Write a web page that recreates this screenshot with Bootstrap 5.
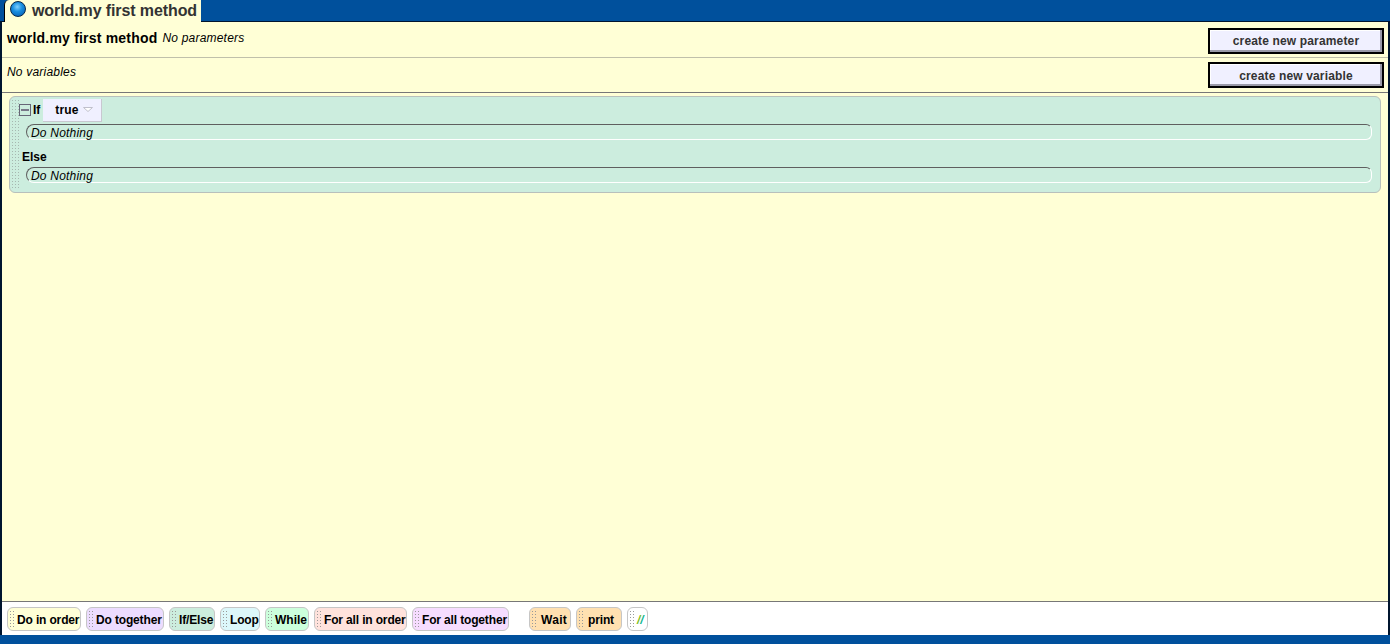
<!DOCTYPE html>
<html lang="en">
<head>
<meta charset="utf-8">
<title>world.my first method</title>
<link href="https://cdn.jsdelivr.net/npm/bootstrap@5.3.0/dist/css/bootstrap.min.css" rel="stylesheet">
<style>
html, body { height: 644px; overflow: hidden; }
body { background: #00509c; font-family: "Liberation Sans", Arial, sans-serif; font-size: 12px; color: #000; width: 1390px; }
.app-shell { height: 644px; }
.tab-strip { height: 22px; padding-left: 4px; flex: none; }
.doc-tab { width: 197px; height: 22px; background: #ffffd6; border-radius: 5px 0 0 0; border-left: 1px solid #000; padding-left: 5px; gap: 6px; font-size: 16px; font-weight: 700; color: #333; z-index: 1; letter-spacing: -.1px; }
.ball { width: 16px; height: 16px; border-radius: 50%; background: radial-gradient(circle at 45% 35%, #7fd0ff 0, #1a8fe0 40%, #0a6cc0 75%, #043a70 100%); border: 1px solid #06284c; flex: none; margin-top: -5px; }
.editor { flex: 1 1 auto; border-left: 2px solid #00152f; border-right: 2px solid #00152f; border-top: 1px solid #00152f; min-height: 0; margin-top: -1px; }
.head-row { height: 36px; flex: none; background: #ffffd6; border-bottom: 1px solid #c0c0aa; padding: 0 4px 0 5px; }
.var-row { height: 35px; flex: none; background: #ffffd6; border-bottom: 1px solid #777; padding: 0 4px 0 5px; }
.method-name { font-size: 14px; font-weight: 700; line-height: 16px; letter-spacing: .2px; }
.hint { font-style: italic; font-size: 12px; line-height: 14px; letter-spacing: .2px; }
.params-text { margin-bottom: 3px; gap: 5px; }
.vars-text { margin-bottom: 6px; }
.make-btn { width: 176px; height: 26px; background: #f0f0ff; color: #333; border: 2px solid #000; font-size: 12px; font-weight: 700; padding: 1px 0 0; box-shadow: inset -2px -2px 0 #9a9aa8, inset 1px 1px 0 #fff; border-radius: 0; line-height: 20px; letter-spacing: .15px; }
.make-first { margin-top: 2px; }
.canvas-area { flex: 1 1 auto; background: #ffffd6; padding: 3px 7px 0 7px; min-height: 0; }
.if-block { height: 97px; background: #ccedde; border: 1px solid #b8c0bc; border-radius: 6px; padding-left: 9px; position: relative; }
.grip { position: absolute; left: 1px; top: 2px; bottom: 2px; width: 8px; background-image: radial-gradient(circle, #a6b8b0 0.7px, transparent 0.9px); background-size: 3px 3px; }
.if-head { height: 26px; }
.toggle { width: 12px; height: 12px; border: 1px solid #667; position: relative; margin-right: 2px; flex: none; }
.toggle::after { content: ""; position: absolute; left: 1px; right: 1px; top: 4px; height: 2px; background: #778; }
.kw { font-weight: 700; line-height: 14px; }
.cond-chip { width: 59px; height: 23px; margin-left: 3px; background: #f0f0ff; border-right: 1px solid #c8c8d0; border-bottom: 1px solid #c8c8d0; padding-left: 12px; gap: 5px; font-weight: 700; letter-spacing: .1px; }
.caret-down { width: 10px; height: 5px; flex: none; margin-top: 0; }
.do-slot { height: 16px; margin: 1px 8px 0 7px; border-top: 1px solid #5f5f5f; border-left: 1px solid #5f5f5f; border-right: 1px solid #fff; border-bottom: 1px solid #fff; border-radius: 8px 6px 6px 8px; padding: 1px 0 0 4px; font-style: italic; line-height: 14px; letter-spacing: .2px; }
.else-line { height: 13px; margin: 10px 0 4px 3px; line-height: 14px; }
.tray { height: 34px; flex: none; background: #fff; border-top: 1px solid #777; padding: 5px 0 0 5px; gap: 5px; }
.piece { height: 24px; border: 1px solid #c6c6c6; border-radius: 6px; padding: 0 1px 0 9px; font-weight: 700; line-height: 24px; position: relative; white-space: nowrap; letter-spacing: -.15px; }
.piece::before { content: ""; position: absolute; left: 1px; top: 2px; bottom: 2px; width: 7px; background-image: radial-gradient(circle, #999 0.6px, transparent 0.8px); background-size: 3px 3px; }
.p-order { background: #ffffd6; width: 74px; }
.p-together { background: #ecdcff; width: 78px; }
.p-ifelse { background: #ccedde; width: 46px; }
.p-loop { background: #dcf7fa; width: 40px; }
.p-while { background: #ccffdc; width: 44px; letter-spacing: 0; }
.p-allorder { background: #ffe2dc; width: 93px; }
.p-alltog { background: #f6dcff; width: 97px; }
.p-wait { background: #ffe0b0; width: 42px; margin-left: 15px; padding-left: 11px; letter-spacing: .3px; }
.p-print { background: #ffe0b0; width: 46px; padding-left: 11px; }
.p-comment { background: #fff; width: 21px; font-style: italic; padding-left: 9px; }
.c-a { color: #7fbf20; }
.c-b { color: #10b890; }
.bottom-bar { height: 9px; flex: none; }
</style>
</head>
<body>
<div class="app-shell d-flex flex-column">
  <div class="tab-strip d-flex">
    <div class="doc-tab d-flex align-items-center position-relative">
      <span class="ball"></span><span>world.my first method</span>
    </div>
  </div>
  <div class="editor d-flex flex-column">
    <div class="head-row d-flex align-items-center justify-content-between">
      <div class="d-flex align-items-center params-text">
        <span class="method-name">world.my first method</span>
        <span class="hint">No parameters</span>
      </div>
      <button type="button" class="make-btn make-first">create new parameter</button>
    </div>
    <div class="var-row d-flex align-items-center justify-content-between">
      <span class="hint vars-text">No variables</span>
      <button type="button" class="make-btn">create new variable</button>
    </div>
    <div class="canvas-area">
      <div class="if-block">
        <span class="grip"></span>
        <div class="if-head d-flex align-items-center">
          <span class="toggle"></span>
          <span class="kw">If</span>
          <span class="cond-chip d-flex align-items-center">true
            <svg class="caret-down" viewBox="0 0 10 5"><path d="M0.5 0.5H9.5L5 4.5Z" fill="#fff" stroke="#c0c0cc"/></svg>
          </span>
        </div>
        <div class="do-slot">Do Nothing</div>
        <div class="else-line kw">Else</div>
        <div class="do-slot">Do Nothing</div>
      </div>
    </div>
    <div class="tray d-flex">
      <div class="piece p-order">Do in order</div>
      <div class="piece p-together">Do together</div>
      <div class="piece p-ifelse">If/Else</div>
      <div class="piece p-loop">Loop</div>
      <div class="piece p-while">While</div>
      <div class="piece p-allorder">For all in order</div>
      <div class="piece p-alltog">For all together</div>
      <div class="piece p-wait">Wait</div>
      <div class="piece p-print">print</div>
      <div class="piece p-comment"><span class="c-a">/</span><span class="c-b">/</span></div>
    </div>
  </div>
  <div class="bottom-bar"></div>
</div>
<script src="https://cdn.jsdelivr.net/npm/bootstrap@5.3.0/dist/js/bootstrap.bundle.min.js"></script>
</body>
</html>
